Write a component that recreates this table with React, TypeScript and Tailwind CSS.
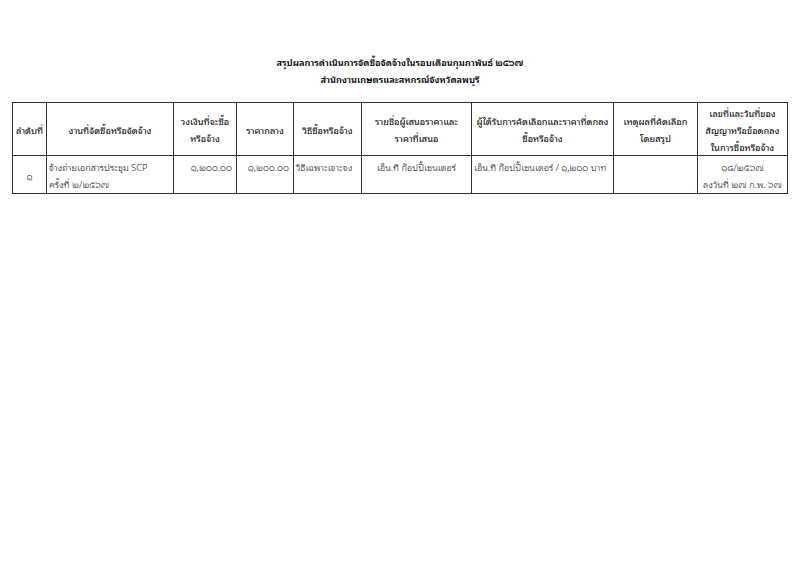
import React from "react";

const widths = [34, 127, 63, 57, 68, 110, 142, 84, 90];

export default function App() {
  const th = "border border-[#333] font-normal text-center align-middle px-[1px] leading-[17px] text-[9.3px] text-black";
  const td = "border border-[#333] font-light align-top px-[2px] pt-[2px] leading-[17px] text-[9.3px] text-[#111]";
  return (
    <div
      className="w-[800px] h-[565px] bg-white"
      style={{ fontFamily: '"Noto Sans Thai Looped", "Noto Sans Thai", "Noto Sans", "Liberation Sans", sans-serif' }}
    >
      <div className="pt-[53px] flex flex-col items-center font-semibold text-[9.3px] leading-[17px] text-black">
        <div>สรุปผลการดำเนินการจัดซื้อจัดจ้างในรอบเดือนกุมภาพันธ์ ๒๕๖๗</div>
        <div>สำนักงานเกษตรและสหกรณ์จังหวัดลพบุรี</div>
      </div>
      <div className="pl-[12px] pt-[15px]">
        <table className="table-fixed border-collapse w-[775px]">
          <colgroup>
            {widths.map((w, i) => (
              <col key={i} style={{ width: w }} />
            ))}
          </colgroup>
          <thead>
            <tr className="h-[53px]">
              <th className={th}>ลำดับที่</th>
              <th className={th}>งานที่จัดซื้อหรือจัดจ้าง</th>
              <th className={th}>วงเงินที่จะซื้อ<br />หรือจ้าง</th>
              <th className={th}>ราคากลาง</th>
              <th className={th}>วิธีซื้อหรือจ้าง</th>
              <th className={th}>รายชื่อผู้เสนอราคาและ<br />ราคาที่เสนอ</th>
              <th className={th}>ผู้ได้รับการคัดเลือกและราคาที่ตกลง<br />ซื้อหรือจ้าง</th>
              <th className={th}>เหตุผลที่คัดเลือก<br />โดยสรุป</th>
              <th className={th}>เลขที่และวันที่ของ<br />สัญญาหรือข้อตกลง<br />ในการซื้อหรือจ้าง</th>
            </tr>
          </thead>
          <tbody>
            <tr className="h-[38px]">
              <td className={`${td} text-center !align-middle`}>๑</td>
              <td className={`${td} text-left`}>จ้างถ่ายเอกสารประชุม SCP<br />ครั้งที่ ๒/๒๕๖๗</td>
              <td className={`${td} text-right pr-[4px]`}>๑,๒๐๐.๐๐</td>
              <td className={`${td} text-right pr-[4px]`}>๑,๒๐๐.๐๐</td>
              <td className={`${td} text-left`}>วิธีเฉพาะเจาะจง</td>
              <td className={`${td} text-center`}>เอ็น.ที ก๊อปปี้เซนเตอร์</td>
              <td className={`${td} text-left whitespace-nowrap`}>เอ็น.ที ก๊อปปี้เซนเตอร์ / ๑,๒๐๐ บาท</td>
              <td className={td}></td>
              <td className={`${td} text-center`}>๑๘/๒๕๖๗<br />ลงวันที่ ๒๗ ก.พ. ๖๗</td>
            </tr>
          </tbody>
        </table>
      </div>
    </div>
  );
}
